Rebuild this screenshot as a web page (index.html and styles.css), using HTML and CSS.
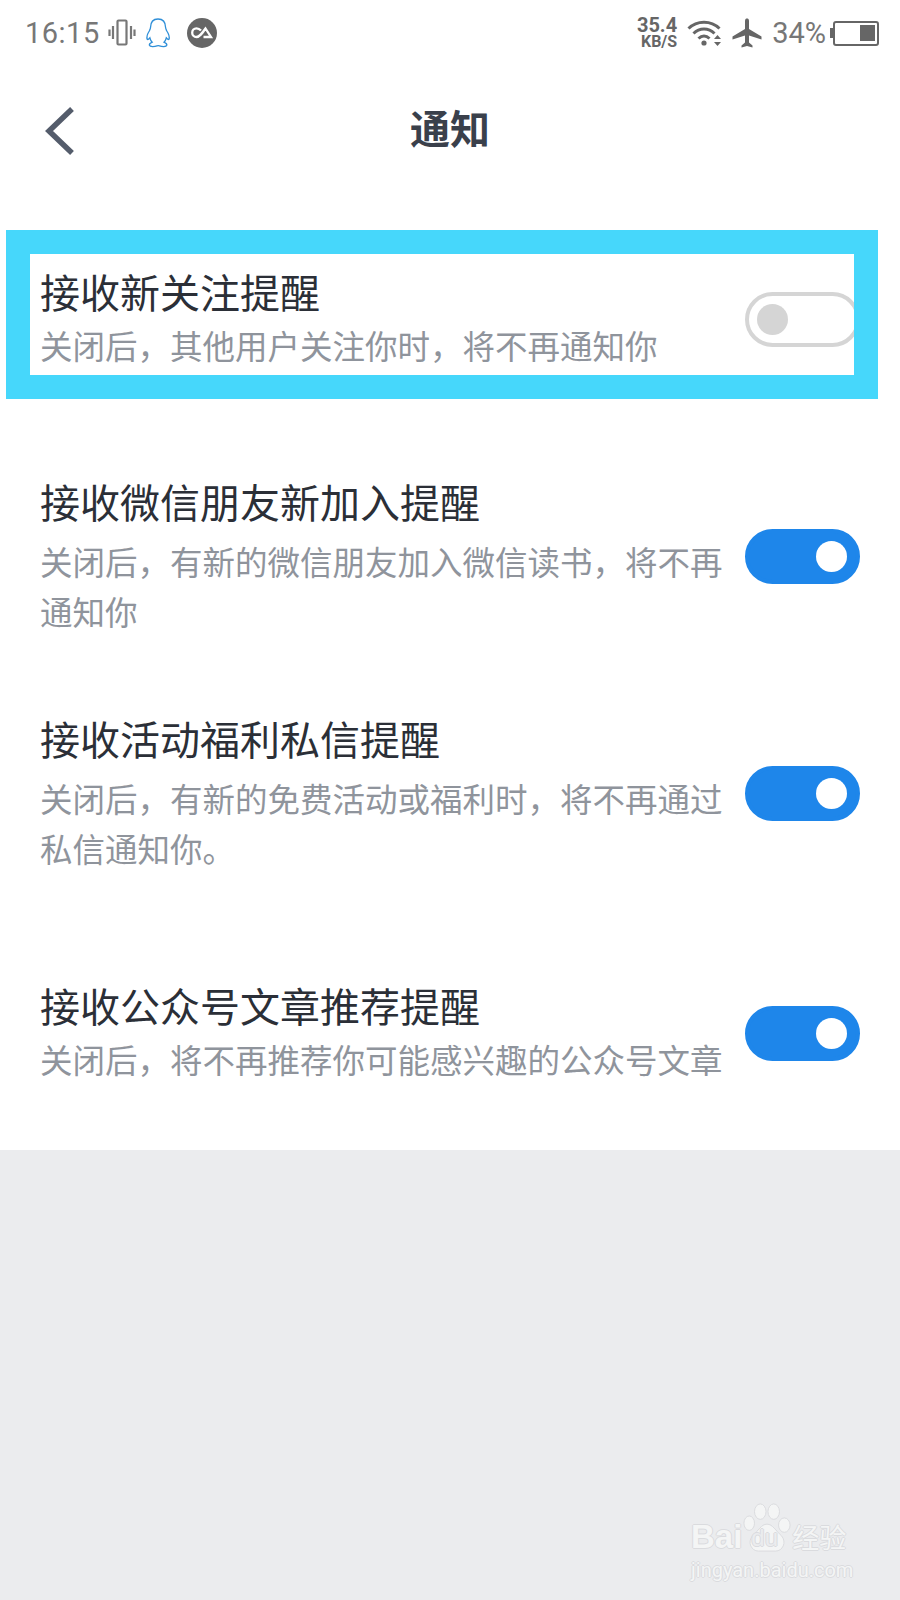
FILE: index.html
```html
<!DOCTYPE html>
<html lang="zh-CN">
<head>
<meta charset="UTF-8" />
<meta name="viewport" content="width=device-width, initial-scale=1" />
<title>通知</title>
<link rel="stylesheet" href="styles.css">
</head>
<body>
  <div class="screen">
    <div class="status-bar">
      <div class="status-left">
        <span class="time">16:15</span>
        <svg class="icon-vibrate" width="28" height="28" viewBox="0 0 28 28" fill="none" stroke="#777" aria-hidden="true">
          <rect x="9.5" y="1.5" width="9" height="24" rx="1" stroke-width="2.2"/>
          <path d="M5 7v13M1.5 10.5v6.5M23 7v13M26.5 10.5v6.5" stroke-width="2.2"/>
        </svg>
        <svg class="icon-qq" width="26" height="30" viewBox="0 0 26 30" fill="none" stroke="#2f8fd8" stroke-width="1.3" aria-hidden="true">
          <path d="M13 1C8 1 5.6 4.6 5.5 9.5 5.4 11 4.7 11.8 4.3 13 2.6 15.5 1.4 18.5 2.2 21.2 3 22 4 20.8 4.9 19.8 5.3 21.6 6 23 7.2 24.2 5.5 25 4 25.8 4.4 27.3 5 29 9.5 28.8 12 27.8 12.8 27.6 13.6 27.6 14.4 27.8 17 28.8 21.3 29 21.8 27.3 22.2 25.8 20.7 25 19 24.2 20.2 23 20.9 21.6 21.3 19.8 22.2 20.8 23.2 22 24 21.2 24.8 18.5 23.5 15.5 21.8 13 21.3 11.8 20.7 11 20.6 9.5 20.5 4.6 18 1 13 1Z"/>
        </svg>
        <svg class="icon-ca" width="30" height="30" viewBox="0 0 30 30" aria-hidden="true">
          <circle cx="15" cy="15" r="15" fill="#666"/>
          <path d="M14 12.5C12.5 10.8 11 10.3 9.5 10.3 7 10.3 5.2 12.3 5.2 14.7S7 19 9.5 19C12.5 19 15 15.5 18.5 10.5L24 19H16.5" fill="none" stroke="#fff" stroke-width="2.3"/>
        </svg>
      </div>
      <div class="status-right">
        <div class="speed">
          <span class="speed-num">35.4</span>
          <span class="speed-unit">KB/S</span>
        </div>
        <svg class="icon-wifi" width="36" height="28" viewBox="0 0 36 28" fill="none" stroke="#666" stroke-width="3" aria-hidden="true">
          <path d="M1.5 9.5C10 1 24 1 32.5 9.5M6.5 14.5C12.5 8.5 21.5 8.5 27.5 14.5M11.5 19.5C15 16 19 16 22.5 19.5"/>
          <circle cx="17" cy="24" r="2.6" fill="#666" stroke="none"/>
          <path d="M30.5 16l3.5 4h-7zM30.5 27l3.5-4h-7z" fill="#666" stroke="none"/>
        </svg>
        <svg class="icon-plane" width="30" height="30" viewBox="0 0 30 30" fill="#666" aria-hidden="true">
          <path d="M13 3C13 1 14 .5 15 .5S17 1 17 3V11L29.5 18.5V21.5L17 17.5V24.5L20.5 27.5V29.5L15 28 9.5 29.5V27.5L13 24.5V17.5L.5 21.5V18.5L13 11Z"/>
        </svg>
        <span class="battery-text">34%</span>
        <div class="battery">
          <div class="battery-cap"></div>
          <div class="battery-body"><div class="battery-level"></div></div>
        </div>
      </div>
    </div>

    <div class="header">
      <svg class="back" width="32" height="50" viewBox="0 0 32 50" fill="none" stroke="#545c6b" stroke-width="5.5" aria-hidden="true">
        <path d="M28 3L5 25L28 47"/>
      </svg>
      <h1 class="header-title">通知</h1>
    </div>

    <div class="list">
      <div class="row row-first">
        <div class="row-text">
          <div class="row-title">接收新关注提醒</div>
          <div class="row-desc">关闭后，其他用户关注你时，将不再通知你</div>
        </div>
        <div class="toggle"></div>
        <div class="highlight"></div>
      </div>

      <div class="row row-second">
        <div class="row-text">
          <div class="row-title">接收微信朋友新加入提醒</div>
          <div class="row-desc row-desc-long">关闭后，有新的微信朋友加入微信读书，将不再通知你</div>
        </div>
        <div class="toggle on toggle-long"></div>
      </div>

      <div class="row row-third">
        <div class="row-text">
          <div class="row-title">接收活动福利私信提醒</div>
          <div class="row-desc row-desc-long">关闭后，有新的免费活动或福利时，将不再通过私信通知你。</div>
        </div>
        <div class="toggle on toggle-long"></div>
      </div>

      <div class="row row-fourth">
        <div class="row-text">
          <div class="row-title">接收公众号文章推荐提醒</div>
          <div class="row-desc">关闭后，将不再推荐你可能感兴趣的公众号文章</div>
        </div>
        <div class="toggle on"></div>
      </div>
    </div>

    <div class="footer-area">
      <div class="watermark">
        <div class="wm-brand">
          <span class="wm-bai">Bai</span>
          <div class="wm-paw">
            <svg width="50" height="50" viewBox="0 0 50 52" fill="#f4f5f5" stroke="#dadbde" stroke-width="1" aria-hidden="true">
              <ellipse cx="18" cy="9" rx="6" ry="8"/>
              <ellipse cx="32" cy="9" rx="6" ry="8"/>
              <ellipse cx="6.5" cy="21" rx="5.5" ry="7.5"/>
              <ellipse cx="43" cy="23" rx="6" ry="7.5"/>
              <path d="M25 22C19 22 16 29 10 34 4 41 9 50 16 50H34C41 50 46 41 40 34 34 29 31 22 25 22Z"/>
            </svg>
            <span class="wm-du">du</span>
          </div>
          <span class="wm-cn">经验</span>
        </div>
        <div class="wm-url">jingyan.baidu.com</div>
      </div>
    </div>
  </div>
</body>
</html>
```

FILE: styles.css
```css
* {
  box-sizing: border-box;
}
body {
  margin: 0;
  background: #fff;
  font-family: "Noto Sans CJK SC", "Noto Sans", sans-serif;
}
.screen {
  width: 900px;
  height: 1600px;
  display: flex;
  flex-direction: column;
  overflow: hidden;
}

/* status bar */
.status-bar {
  height: 64px;
  padding: 17px 21px 0 25px;
  display: flex;
  justify-content: space-between;
  align-items: flex-start;
  color: #777;
}
.status-left,
.status-right {
  display: flex;
  align-items: center;
  height: 32px;
}
.time {
  font-family: Roboto, sans-serif;
  font-size: 29px;
  line-height: 32px;
  letter-spacing: 0.5px;
}
.icon-vibrate {
  margin-left: 8px;
}
.icon-qq {
  margin-left: 9px;
}
.icon-ca {
  margin-left: 16px;
}
.speed {
  display: flex;
  flex-direction: column;
  align-items: flex-end;
  font-family: Roboto, sans-serif;
  font-weight: 700;
  color: #666;
}
.speed-num {
  font-size: 20px;
  line-height: 18px;
}
.speed-unit {
  font-size: 16px;
  line-height: 16px;
}
.icon-wifi {
  margin-left: 10px;
}
.icon-plane {
  margin-left: 9px;
}
.battery-text {
  font-family: Roboto, sans-serif;
  font-size: 29px;
  line-height: 32px;
  margin-left: 10px;
}
.battery {
  display: flex;
  align-items: center;
  margin-left: 4px;
}
.battery-cap {
  width: 3px;
  height: 10px;
  background: #666;
}
.battery-body {
  width: 46px;
  height: 25px;
  border: 2.5px solid #666;
  border-radius: 3px;
  padding: 2.5px;
  display: flex;
  justify-content: flex-end;
}
.battery-level {
  width: 15px;
  background: #666;
}

/* header */
.header {
  height: 130px;
  padding-bottom: 4px;
  position: relative;
  display: flex;
  align-items: center;
  justify-content: center;
}
.back {
  position: absolute;
  left: 44px;
  top: 42px;
}
.header-title {
  margin: 0;
  font-size: 40px;
  line-height: 56px;
  font-weight: 700;
  color: #3a404b;
}

/* list */
.list {
  display: flex;
  flex-direction: column;
}
.row {
  display: flex;
  align-items: center;
  justify-content: space-between;
  padding: 0 40px 0 40px;
  position: relative;
}
.row-first {
  margin-top: 69px;
}
.row-second {
  margin-top: 104px;
}
.row-third {
  margin-top: 74px;
}
.row-fourth {
  margin-top: 104px;
}
.row-text {
  width: 690px;
}
.row-title {
  font-size: 40px;
  line-height: 56px;
  color: #2b2f37;
}
.row-desc {
  font-size: 32.5px;
  line-height: 48px;
  color: #8f949c;
  margin-top: 2px;
}
.row-desc-long {
  line-height: 50px;
  margin-top: 7px;
}
.toggle {
  width: 115px;
  height: 55px;
  margin-top: 6px;
  border-radius: 28px;
  background: #fff;
  border: 4px solid #d5d5d5;
  position: relative;
  flex-shrink: 0;
}
.toggle-long {
  margin-top: 4px;
}
.toggle::after {
  content: "";
  position: absolute;
  left: 8px;
  top: 8px;
  width: 31px;
  height: 31px;
  border-radius: 50%;
  background: #d5d5d5;
}
.toggle.on {
  background: #1e86ea;
  border-color: #1e86ea;
}
.toggle.on::after {
  left: auto;
  right: 9px;
  background: #fff;
}

/* blue frame over the first row, it also hides the end of the toggle */
.highlight {
  position: absolute;
  left: 6px;
  right: 22px;
  top: -33px;
  bottom: -30px;
  border: 24px solid #46d7fb;
  pointer-events: none;
}

/* grey bottom */
.footer-area {
  flex: 1;
  margin-top: 67px;
  background: #ebecee;
  position: relative;
}
.watermark {
  position: absolute;
  right: 48px;
  bottom: 18px;
  width: 161px;
  color: #f4f5f5;
  text-shadow: 1px 0 0 #dadbde, -1px 0 0 #dadbde, 0 1px 0 #dadbde, 0 -1px 0 #dadbde;
}
.wm-brand {
  display: flex;
  align-items: flex-end;
}
.wm-bai {
  font-family: "Liberation Sans", sans-serif;
  font-size: 33px;
  line-height: 32px;
  font-weight: 700;
}
.wm-paw {
  position: relative;
  height: 50px;
}
.wm-paw svg {
  display: block;
}
.wm-du {
  position: absolute;
  left: 9px;
  bottom: 2px;
  font-family: "Liberation Sans", sans-serif;
  font-size: 24px;
  line-height: 26px;
  color: #ebecee;
}
.wm-cn {
  font-size: 27px;
  line-height: 32px;
  white-space: nowrap;
}
.wm-url {
  margin-top: 5px;
  font-family: Roboto, sans-serif;
  font-size: 20px;
  line-height: 24px;
  white-space: nowrap;
}
```
